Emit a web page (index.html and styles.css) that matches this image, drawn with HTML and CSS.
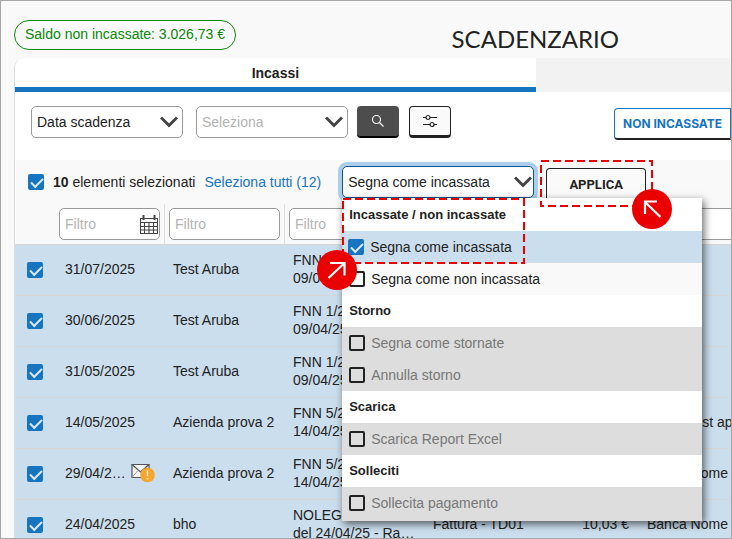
FILE: index.html
```
<!DOCTYPE html>
<html lang="it">
<head>
    <meta charset="utf-8">
    <title>Scadenzario</title>
    <link rel="stylesheet" href="styles.css">
</head>
<body>

<header class="page-header">
    <span class="saldo">Saldo non incassate: 3.026,73 €</span>
    <h1>SCADENZARIO</h1>
</header>

<main class="panel">
    <nav class="tabs">
        <button class="tab active">Incassi</button>
        <button class="tab" aria-label="Pagamenti"></button>
    </nav>

    <div class="toolbar">
        <select class="select" aria-label="Tipo data">
            <option>Data scadenza</option>
        </select>
        <select class="select placeholder" aria-label="Periodo">
            <option>Seleziona</option>
        </select>
        <div class="icon-buttons">
            <button class="icon-button dark" aria-label="Cerca">
                <svg width="14" height="14" viewBox="0 0 14 14" fill="none" stroke="#fff" stroke-width="1.1"><circle cx="5.5" cy="5.5" r="4"/><path d="M8.5 8.5L12.5 12.5"/></svg>
            </button>
            <button class="icon-button" aria-label="Filtri">
                <svg width="14" height="14" viewBox="0 0 14 14" fill="none" stroke="#222" stroke-width="1.2"><path d="M0 3.5H3M7 3.5H14M0 10.5H7M11 10.5H14"/><circle cx="5" cy="3.5" r="2"/><circle cx="9" cy="10.5" r="2"/></svg>
            </button>
        </div>
        <button class="button-blue">NON INCASSATE</button>
    </div>

    <div class="selection-bar">
        <input type="checkbox" class="check" aria-label="Seleziona pagina" checked>
        <span class="count"><b>10</b> elementi selezionati</span>
        <a class="select-all" href="#">Seleziona tutti (12)</a>
        <div class="action">
            <select class="select focused" aria-label="Azione">
                <option>Segna come incassata</option>
            </select>
            <div class="menu">
                <div class="menu-title">Incassate / non incassate</div>
                <label class="menu-item selected"><input type="checkbox" class="check" checked>Segna come incassata</label>
                <label class="menu-item"><input type="checkbox" class="check">Segna come non incassata</label>
                <div class="menu-title">Storno</div>
                <label class="menu-item disabled"><input type="checkbox" class="check" disabled>Segna come stornate</label>
                <label class="menu-item disabled"><input type="checkbox" class="check" disabled>Annulla storno</label>
                <div class="menu-title">Scarica</div>
                <label class="menu-item disabled"><input type="checkbox" class="check" disabled>Scarica Report Excel</label>
                <div class="menu-title">Solleciti</div>
                <label class="menu-item disabled"><input type="checkbox" class="check" disabled>Sollecita pagamento</label>
                <div class="highlight highlight-menu">
                    <svg class="dashes"><rect width="100%" height="100%"/></svg>
                    <svg class="arrow arrow-left" viewBox="0 0 40 40" fill="none" stroke="#fff" stroke-width="2.2"><circle cx="20" cy="20" r="20" fill="#eb0000" stroke="none"/><path d="M11.5 28L27 13.5M13 13H27.5V25.5"/></svg>
                </div>
            </div>
        </div>
        <div class="apply">
            <button class="button-apply">APPLICA</button>
            <div class="highlight highlight-apply">
                <svg class="dashes"><rect width="100%" height="100%"/></svg>
                <svg class="arrow arrow-right" viewBox="0 0 40 40" fill="none" stroke="#fff" stroke-width="2.2"><circle cx="20" cy="20" r="20" fill="#eb0000" stroke="none"/><path d="M28.5 28L13 13M13 25V12.5H25"/></svg>
            </div>
        </div>
    </div>

    <table class="grid">
        <colgroup>
            <col class="col-check">
            <col class="col-date">
            <col class="col-name">
            <col class="col-doc">
            <col class="col-type">
            <col class="col-amount">
            <col class="col-bank">
        </colgroup>
        <thead>
            <tr>
                <th></th>
                <th>
                    <div class="filter">
                        <input type="text" placeholder="Filtro" aria-label="Filtra data">
                        <svg width="20" height="21" viewBox="0 0 20 21" fill="none" stroke="#444" stroke-width="1.1"><path d="M1.5 4.500H18.500V19.500H1.500ZM1.500 8.500H18.500M1.500 12.500H18.500M1.500 16H18.500M5.500 8V20M10 8V20M14.500 8V20"/><path d="M4.500 1V6M15.500 1V6" stroke-width="2"/></svg>
                    </div>
                </th>
                <th><div class="filter"><input type="text" placeholder="Filtro" aria-label="Filtra cliente"></div></th>
                <th><div class="filter"><input type="text" placeholder="Filtro" aria-label="Filtra documento"></div></th>
                <th></th>
                <th></th>
                <th><div class="filter"><input type="text" aria-label="Filtra banca"></div></th>
            </tr>
        </thead>
        <tbody>
            <tr>
                <td class="cell-check"><input type="checkbox" class="check" aria-label="Riga 1" checked></td>
                <td class="cell-date">31/07/2025</td>
                <td>Test Aruba</td>
                <td>FNN 1/25<br>09/04/25</td>
                <td></td><td></td><td></td>
            </tr>
            <tr>
                <td class="cell-check"><input type="checkbox" class="check" aria-label="Riga 2" checked></td>
                <td class="cell-date">30/06/2025</td>
                <td>Test Aruba</td>
                <td>FNN 1/25<br>09/04/25</td>
                <td></td><td></td><td></td>
            </tr>
            <tr>
                <td class="cell-check"><input type="checkbox" class="check" aria-label="Riga 3" checked></td>
                <td class="cell-date">31/05/2025</td>
                <td>Test Aruba</td>
                <td>FNN 1/25<br>09/04/25</td>
                <td></td><td></td><td></td>
            </tr>
            <tr>
                <td class="cell-check"><input type="checkbox" class="check" aria-label="Riga 4" checked></td>
                <td class="cell-date">14/05/2025</td>
                <td>Azienda prova 2</td>
                <td>FNN 5/25<br>14/04/25</td>
                <td></td><td></td>
                <td>Banca test appoggio</td>
            </tr>
            <tr>
                <td class="cell-check"><input type="checkbox" class="check" aria-label="Riga 5" checked></td>
                <td class="cell-date">
                    <div class="date-mail">
                        <span>29/04/2…</span>
                        <svg width="24" height="20" viewBox="0 0 24 20" fill="none"><path d="M1 1.5H18V14.5H1Z" fill="#f5f5f5" stroke="#555" stroke-width="1.2"/><path d="M1 1.5L9.5 9L18 1.5" stroke="#555" stroke-width="1.2"/><path d="M1 14.5L6.5 8" stroke="#999"/><circle cx="16.5" cy="12" r="7.3" fill="#f5a62c"/><path d="M16.5 7.5V13.5M16.5 15V16.5" stroke="#fff" stroke-width="1.3"/></svg>
                    </div>
                </td>
                <td>Azienda prova 2</td>
                <td>FNN 5/25<br>14/04/25</td>
                <td></td><td></td>
                <td>Banca Nome</td>
            </tr>
            <tr>
                <td class="cell-check"><input type="checkbox" class="check" aria-label="Riga 6" checked></td>
                <td class="cell-date">24/04/2025</td>
                <td>bho</td>
                <td>NOLEGGIO<br>del 24/04/25 - Ra…</td>
                <td>Fattura - TD01</td>
                <td class="cell-amount">10,03 €</td>
                <td>Banca Nome</td>
            </tr>
        </tbody>
    </table>
</main>

</body>
</html>
```
FILE: styles.css
```
* {
    box-sizing: border-box;
}
body {
    margin: 0;
    height: 100vh;
    overflow: hidden;
    border: 1px solid #a6a6a6;
    background: #f9f9f9;
    color: #222;
    font-family: "Liberation Sans", Arial, sans-serif;
    font-size: 14px;
    line-height: 18px;
}
button, input, select {
    margin: 0;
    font: inherit;
    color: inherit;
}
.page-header {
    display: flex;
    align-items: flex-start;
    justify-content: space-between;
    height: 57px;
    padding: 19px 112px 0 13px;
}
.saldo {
    padding: 4px 10px 6px;
    border: 1px solid #0a870a;
    border-radius: 15px;
    color: #0a870a;
}
.page-header h1 {
    margin: 5px 0 0;
    font-family: Lato, sans-serif;
    font-size: 24px;
    font-weight: 400;
    line-height: 28px;
}
.panel {
    margin-left: 13px;
    border-left: 1px solid #ddd;
    border-radius: 10px 0 0 0;
    background: #fff;
    overflow: hidden;
}
.tabs {
    display: flex;
}
.tab {
    flex: 3;
    height: 34px;
    padding: 0;
    border: none;
    background: #f2f2f2;
    font-weight: bold;
}
.tab.active {
    flex: 8;
    border-bottom: 5px solid #1774bf;
    background: #fff;
}
.toolbar {
    display: flex;
    align-items: flex-start;
    gap: 13px;
    height: 68px;
    padding: 14px 0 0 16px;
}
.select {
    appearance: none;
    width: 152px;
    height: 32px;
    padding: 0 5px;
    border: 1px solid #999;
    border-radius: 5px;
    background: #fff url("data:image/svg+xml,%3Csvg xmlns='http://www.w3.org/2000/svg' width='18' height='12' fill='none' stroke='%23444' stroke-width='3'%3E%3Cpath d='M1 1.5L9 9.5L17 1.5'/%3E%3C/svg%3E") no-repeat right 4px center;
}
.select.placeholder {
    color: #b3b3b3;
}
.select.focused {
    display: block;
    width: 192px;
    background-position: right 1px center;
    border-color: #14548c;
    box-shadow: 0 0 0 4px #a9cfec;
}
.icon-buttons {
    display: flex;
    gap: 10px;
    margin-left: -4px;
}
.icon-button {
    display: flex;
    align-items: center;
    justify-content: center;
    width: 42px;
    height: 32px;
    padding: 0;
    border: 1px solid #222;
    border-bottom-width: 3px;
    border-radius: 4px;
    background: #fafafa;
}
.icon-button.dark {
    border: none;
    border-bottom: 2px solid #000;
    background: #4d4d4d;
}
.button-blue {
    height: 32px;
    margin: 2px 0 0 auto;
    padding: 0 8px;
    border: 1px solid #1774bf;
    border-bottom: 2px solid #222;
    border-radius: 4px 0 0 4px;
    background: #fff;
    color: #1774bf;
    font-family: Inter, sans-serif;
    font-size: 12px;
    font-weight: bold;
}
.selection-bar {
    display: flex;
    align-items: center;
    height: 44px;
    padding-left: 13px;
    background: #f9f9f9;
}
.count {
    margin-left: 9px;
}
.select-all {
    margin-left: 9px;
    color: #1774bf;
    text-decoration: none;
}
.action {
    position: relative;
    z-index: 2;
    margin-left: 21px;
}
.apply {
    position: relative;
    align-self: flex-end;
    margin-left: 12px;
}
.button-apply {
    display: block;
    width: 100px;
    height: 36px;
    border: 1px solid #222;
    border-bottom-width: 3px;
    border-radius: 4px;
    background: #fafafa;
    font-family: Roboto, sans-serif;
    font-size: 13px;
    font-weight: bold;
}
.check {
    appearance: none;
    position: relative;
    flex: none;
    width: 16px;
    height: 16px;
    border: 2px solid #222;
    border-radius: 2px;
}
.check:checked {
    border-color: #1774bf;
    background: #1774bf;
}
.check:checked::after {
    content: "";
    position: absolute;
    left: 1px;
    top: 2px;
    width: 10px;
    height: 5px;
    border: solid #d8e8f4;
    border-width: 0 0 2px 2px;
    transform: rotate(-45deg);
}

/* action menu */
.menu {
    position: absolute;
    left: 0;
    top: 32px;
    width: 360px;
    padding: 1px 0 2px;
    background: linear-gradient(#fff 50%, #ddd 50%);
    box-shadow: 2px 3px 8px rgba(0, 0, 0, 0.6);
}
.menu-title, .menu-item {
    display: flex;
    align-items: center;
    gap: 6px;
    height: 32px;
    padding-left: 7px;
}
.menu-title {
    background: #fff;
    font-size: 13px;
    font-weight: bold;
}
.menu-item {
    background: #f9f9f9;
}
.menu-item.selected {
    padding-left: 6px;
    background: #cbdeed;
}
.menu-item.disabled {
    background: #ddd;
    color: #777;
}

/* callouts */
.highlight {
    position: absolute;
}
.highlight-menu {
    left: 1px;
    top: 1px;
    width: 181px;
    height: 64px;
}
.highlight-apply {
    z-index: 3;
    left: -5px;
    top: -7px;
    width: 111px;
    height: 45px;
}
.dashes {
    display: block;
    width: 100%;
    height: 100%;
    overflow: visible;
    fill: none;
    stroke: #eb0000;
    stroke-width: 2px;
    stroke-dasharray: 8 4;
}
.arrow {
    position: absolute;
    width: 40px;
    height: 40px;
}
.arrow-left {
    left: -26px;
    bottom: -27px;
}
.arrow-right {
    right: -20px;
    bottom: -23px;
}

/* grid */
.grid {
    width: 816px;
    table-layout: fixed;
    border-collapse: separate;
    border-spacing: 0;
}
.col-check {
    width: 40px;
}
.col-date {
    width: 110px;
}
.col-name {
    width: 120px;
}
.col-doc {
    width: 140px;
}
.col-type {
    width: 114px;
}
.col-amount {
    width: 100px;
}
.grid th {
    height: 41px;
    padding: 0 4px;
    border-bottom: 1px solid #d6d6d6;
    border-right: 1px solid #ddd;
    background: #f9f9f9;
    font-weight: normal;
}
.grid th:first-child {
    border-right: none;
}
.filter {
    display: flex;
    align-items: center;
    height: 32px;
    padding: 0 0 0 5px;
    border: 1px solid #999;
    border-radius: 5px;
    background: #fff;
}
.filter input {
    flex: 1;
    min-width: 0;
    padding: 0;
    border: none;
    background: none;
}
.filter input::placeholder {
    color: #b3b3b3;
}
.grid td {
    height: 51px;
    padding: 0 8px 2px;
    border-bottom: 1px solid #d6d6d6;
    background: #cbdeed;
    white-space: nowrap;
}
.grid .cell-check {
    padding: 0 12px;
}
.cell-check .check {
    display: block;
}
.grid .cell-date {
    padding-left: 10px;
}
.grid .cell-amount {
    padding-right: 10px;
    text-align: right;
}
.date-mail {
    display: flex;
    align-items: center;
    gap: 5px;
}
```
